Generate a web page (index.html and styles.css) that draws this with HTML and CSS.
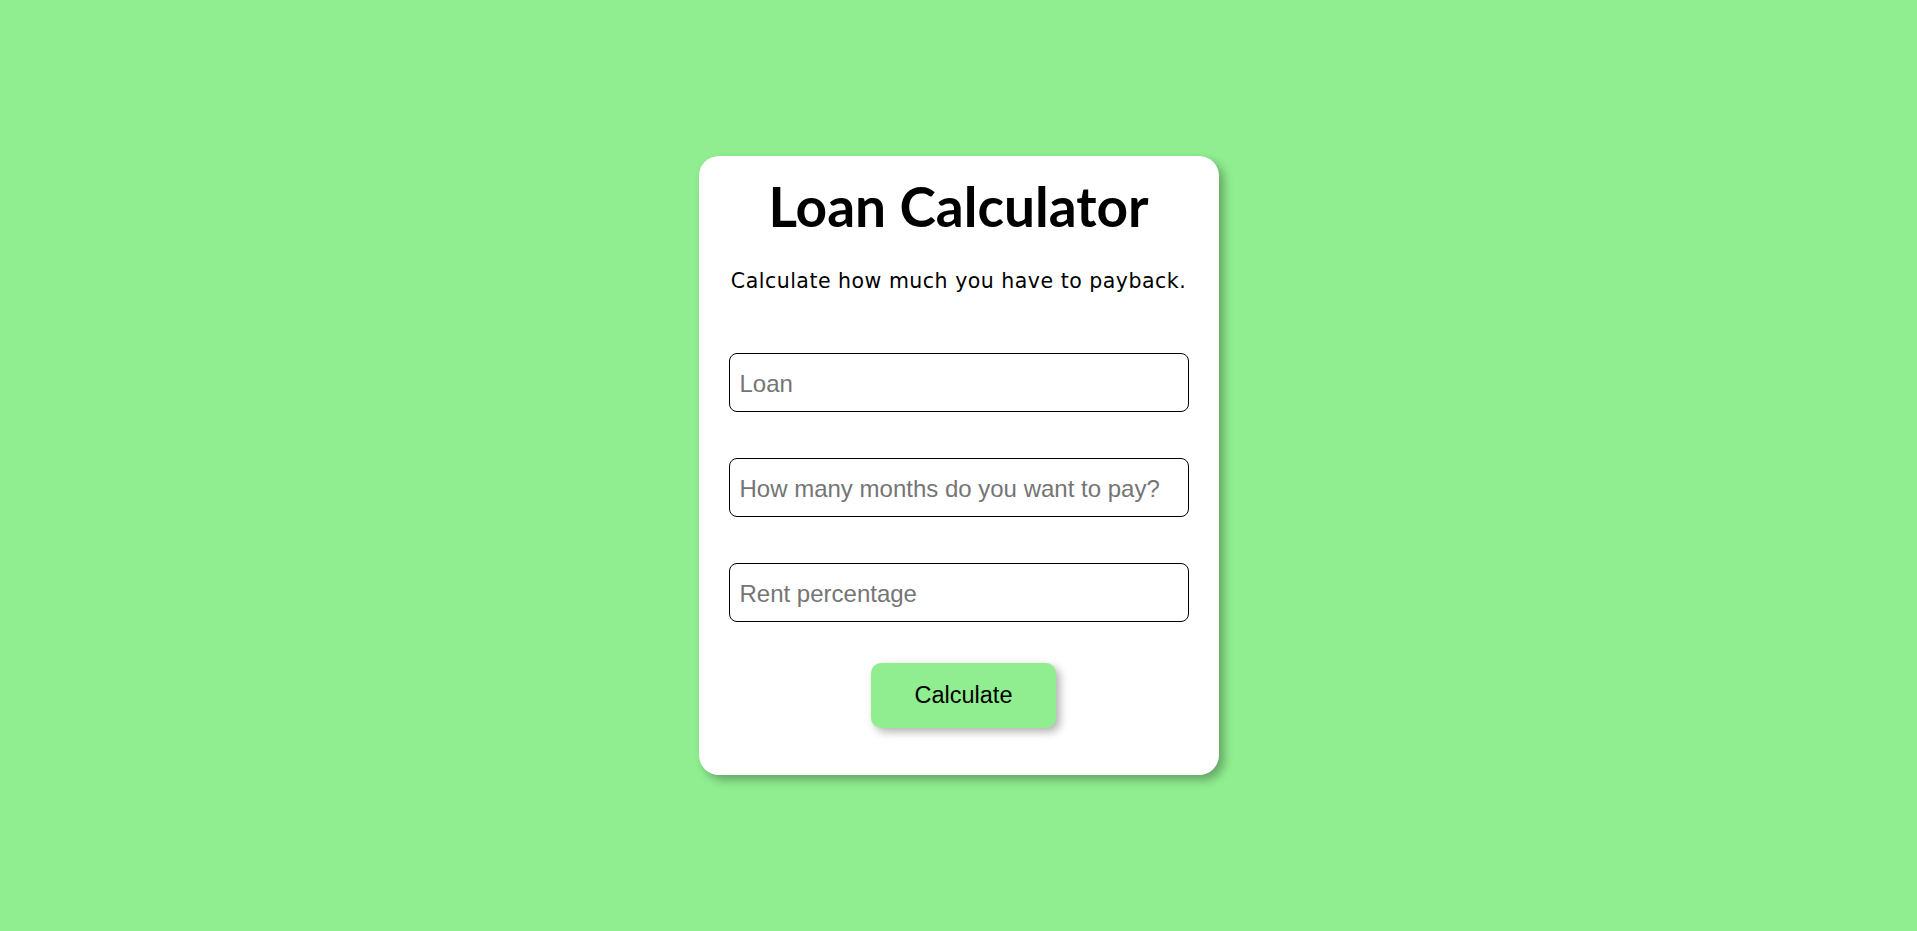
FILE: index.html
```html
<!DOCTYPE html>
<html lang="en">
<head>
<meta charset="utf-8">
<title>Loan Calculator</title>
<link rel="stylesheet" href="styles.css">
</head>
<body>
<main class="card">
  <h1 class="title">Loan Calculator</h1>
  <p class="subtitle">Calculate how much you have to payback.</p>
  <form class="form">
    <input class="field" type="number" placeholder="Loan">
    <input class="field" type="number" placeholder="How many months do you want to pay?">
    <input class="field" type="number" placeholder="Rent percentage">
    <button class="btn" type="button">Calculate</button>
  </form>
</main>
</body>
</html>
```

FILE: styles.css
```css
html, body {
  margin: 0;
  padding: 0;
}

body {
  background: #90ee90;
  min-height: 100vh;
  display: flex;
  align-items: center;
  justify-content: center;
  font-family: "DejaVu Sans", "Open Sans", sans-serif;
}

.card {
  box-sizing: border-box;
  width: 520px;
  background: #ffffff;
  border-radius: 20px;
  box-shadow: 5px 5px 10px rgba(0, 0, 0, 0.3);
  padding: 18px 30px 47px;
  display: flex;
  flex-direction: column;
  align-items: center;
}

.title {
  margin: 0;
  font-family: "Lato", "Open Sans", sans-serif;
  font-size: 55px;
  line-height: 64px;
  font-weight: 700;
  color: #000;
}

.subtitle {
  margin: 31px 0 0;
  font-size: 20.5px;
  line-height: 24px;
  letter-spacing: 0.5px;
  color: #000;
}

.form {
  margin-top: 60px;
  width: 100%;
  display: flex;
  flex-direction: column;
  align-items: center;
  gap: 46px;
}

.field {
  box-sizing: border-box;
  width: 100%;
  height: 59px;
  padding: 16px 10px 14px;
  border: 1px solid #000;
  border-radius: 8px;
  font-family: "Liberation Sans", Arial, sans-serif;
  font-size: 24px;
  color: #000;
  background: #fff;
  outline: none;
}

.field::placeholder {
  color: #757575;
}

.btn {
  margin: -5px 0 0 10px;
  box-sizing: border-box;
  width: 185px;
  height: 65px;
  padding: 0;
  border: none;
  border-radius: 10px;
  background: #90ee90;
  color: #000;
  font-family: "Liberation Sans", Arial, sans-serif;
  font-size: 23.5px;
  box-shadow: 4px 4px 8px rgba(0, 0, 0, 0.3);
  cursor: pointer;
}
```
